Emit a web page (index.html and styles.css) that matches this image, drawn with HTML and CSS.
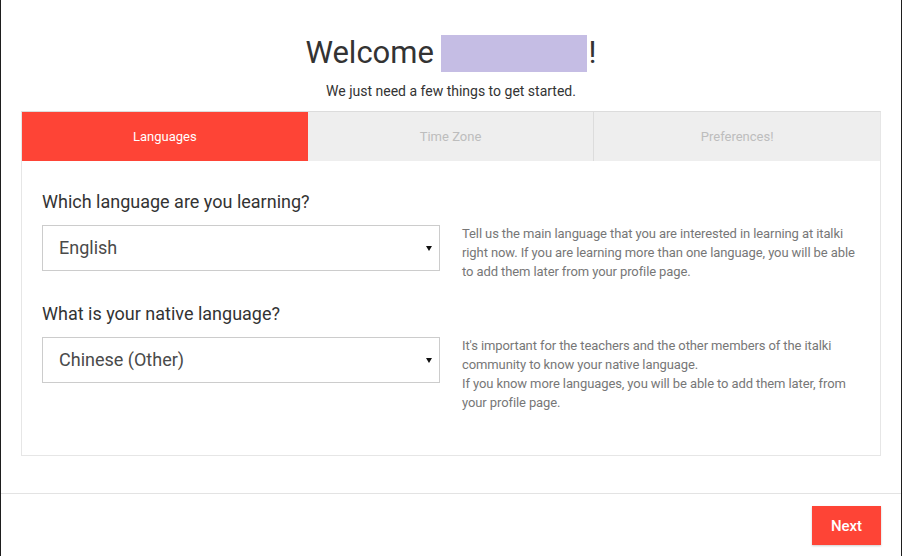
FILE: index.html
```html
<!DOCTYPE html>
<html>
<head>
<meta charset="utf-8">
<link rel="stylesheet" href="styles.css">
</head>
<body>
<div class="modal">
  <div class="modal-body">
    <h1 class="title">Welcome <span class="redacted"></span>!</h1>
    <p class="subtitle">We just need a few things to get started.</p>
    <div class="panel">
      <div class="tabs">
        <div class="tab active">Languages</div>
        <div class="tab">Time Zone</div>
        <div class="tab last">Preferences!</div>
      </div>
      <div class="form">
        <div class="row">
          <div class="field">
            <div class="label">Which language are you learning?</div>
            <div class="select">English<span class="arrow"></span></div>
          </div>
          <div class="help">Tell us the main language that you are interested in learning at italki right now. If you are learning more than one language, you will be able to add them later from your profile page.</div>
        </div>
        <div class="row">
          <div class="field">
            <div class="label">What is your native language?</div>
            <div class="select">Chinese (Other)<span class="arrow"></span></div>
          </div>
          <div class="help">It's important for the teachers and the other members of the italki community to know your native language.<br>If you know more languages, you will be able to add them later, from your profile page.</div>
        </div>
      </div>
    </div>
  </div>
  <div class="modal-footer">
    <button class="next">Next</button>
  </div>
</div>
</body>
</html>
```
FILE: styles.css
```css
* { box-sizing: border-box; }
html, body { margin: 0; padding: 0; background: #fff; }
body { font-family: Roboto, "Liberation Sans", Arial, sans-serif; color: #333; }
.modal {
  width: 902px;
  height: 556px;
  border-left: 1px solid #1e1e1e;
  border-right: 1px solid #1e1e1e;
  background: #fff;
  display: flex;
  flex-direction: column;
}
.modal-body { padding: 35px 20px 0; }
.title {
  margin: 0;
  text-align: center;
  font-size: 31px;
  line-height: 36px;
  font-weight: 400;
  color: #333;
}
.redacted {
  display: inline-block;
  width: 146px;
  height: 37px;
  background: #c5bde4;
  vertical-align: -9px;
  margin-left: -1px;
  margin-right: 2px;
}
.subtitle {
  margin: 9px 0 10px;
  text-align: center;
  font-size: 14px;
  line-height: 20px;
  color: #333;
}
.panel {
  border: 1px solid #e6e6e6;
  border-top-color: #dcdcdc;
}
.tabs { display: flex; height: 49px; }
.tab {
  flex: 1;
  display: flex;
  align-items: center;
  justify-content: center;
  background: #eeeeee;
  color: #bdbdbd;
  font-size: 13px;
  border-right: 1px solid #dcdcdc;
}
.tab.last { border-right: none; }
.tab.active { background: #fe4436; color: #fff; border-right: none; }
.form {
  padding: 29px 20px 43px;
  display: flex;
  flex-direction: column;
  gap: 21px;
}
.row { display: flex; gap: 22px; }
.field { width: 398px; flex: none; }
.label {
  font-size: 18px;
  line-height: 24px;
  color: #333;
  margin-bottom: 11px;
}
.select {
  position: relative;
  height: 46px;
  border: 1px solid #cccccc;
  padding-left: 16px;
  font-size: 18px;
  line-height: 44px;
  color: #4a4a4a;
}
.arrow {
  position: absolute;
  right: 7px;
  top: 20px;
  width: 0;
  height: 0;
  border-left: 3px solid transparent;
  border-right: 3px solid transparent;
  border-top: 5px solid #111;
}
.help {
  flex: 1;
  padding-top: 34px;
  font-size: 13px;
  line-height: 19px;
  color: #777;
  letter-spacing: -0.1px;
}
.modal-footer {
  margin-top: 37px;
  border-top: 1px solid #e3e3e3;
  padding: 12px 20px 0;
  display: flex;
  justify-content: flex-end;
}
.next {
  width: 69px;
  height: 39px;
  border: none;
  background: #fe4436;
  color: #fff;
  font-family: Roboto, "Liberation Sans", Arial, sans-serif;
  font-size: 15px;
  font-weight: 500;
  box-shadow: 0 1px 2px rgba(0,0,0,0.2);
  padding: 0;
}
```
